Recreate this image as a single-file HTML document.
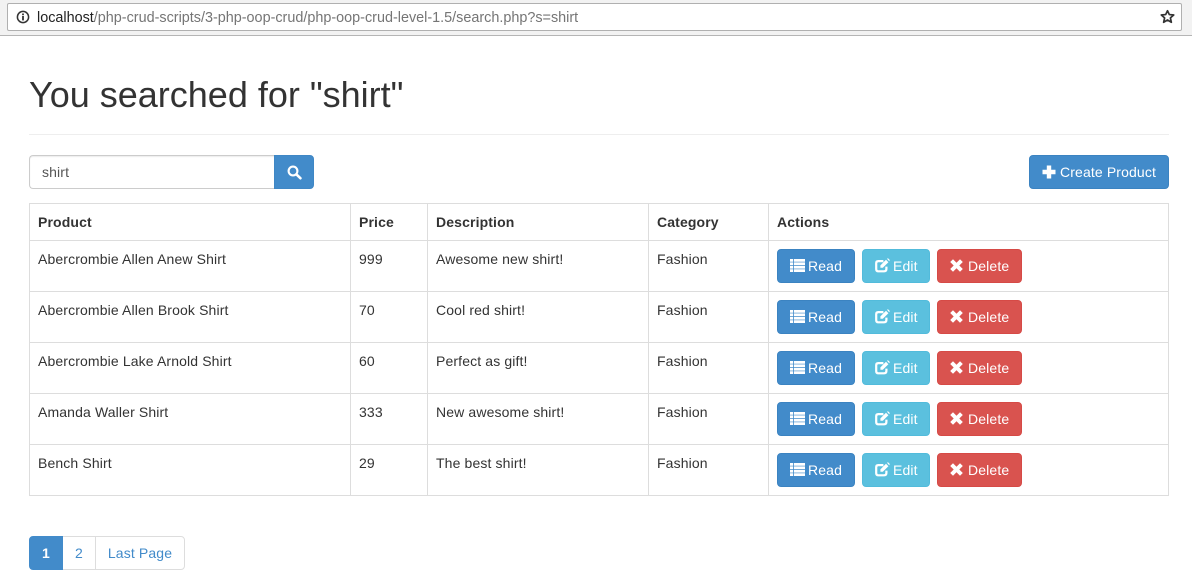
<!DOCTYPE html>
<html><head><meta charset="utf-8">
<style>
*{box-sizing:border-box}
html,body{margin:0;padding:0;background:#fff;width:1192px;height:585px;overflow:hidden;font-family:"Liberation Sans",Arial,sans-serif;font-size:14px;color:#333;letter-spacing:.13px}
.a{position:absolute}
.bar{left:0;top:0;width:1192px;height:36px;background:#f2f2f2;border-bottom:1px solid #b5b5b5}
.url{left:7px;top:3px;width:1175px;height:28px;background:#fff;border:1px solid #b0b0b0;border-radius:2px}
.urlt{left:37px;top:10px;font-size:14.4px;line-height:16px;color:#757575;white-space:nowrap;letter-spacing:0}
.urlt b{font-weight:normal;color:#222}
h1{position:absolute;left:29px;top:75px;margin:0;font-size:36px;font-weight:normal;line-height:40px;white-space:nowrap;letter-spacing:0}
.hr{left:29px;top:134px;width:1140px;height:1px;background:#eee}
.inp{left:29px;top:155px;width:246px;height:34px;border:1px solid #ccc;border-right:0;border-radius:4px 0 0 4px;padding:6px 12px;line-height:20px;color:#555;box-shadow:inset 0 1px 1px rgba(0,0,0,.075)}
.sbtn{left:274px;top:155px;width:40px;height:34px;background:#428bca;border:1px solid #3f87c5;border-radius:0 4px 4px 0}
.btn{position:absolute;height:34px;border-radius:4px;color:#fff;line-height:32px;white-space:nowrap;border:1px solid}
.btn svg{position:absolute}
.btn span{position:absolute;top:0}
.p{background:#428bca;border-color:#3b83c1}
.i{background:#5bc0de;border-color:#52bbdb}
.d{background:#d9534f;border-color:#d64a46}
.h{background:#ddd}
.t{position:absolute;line-height:20px;white-space:nowrap}
.th{font-weight:bold}
.pg{position:absolute;top:536px;height:34px;line-height:32px;text-align:center;color:#428bca;border:1px solid #ddd;background:#fff}
</style></head><body>
<div class="a bar"></div>
<div class="a url"></div>
<svg class="a" style="left:16px;top:10px" width="14" height="14" viewBox="0 0 14 14"><circle cx="7" cy="7" r="5.6" fill="none" stroke="#333" stroke-width="1.5"/><rect x="6.1" y="6" width="1.8" height="4.4" fill="#333"/><rect x="6.1" y="3.5" width="1.8" height="1.7" fill="#333"/></svg>
<div class="a urlt"><b>localhost</b>/php-crud-scripts/3-php-oop-crud/php-oop-crud-level-1.5/search.php?s=shirt</div>
<svg class="a" style="left:1160px;top:9px" width="15" height="15" viewBox="0 0 14 14"><path d="M7 1.6 8.7 5.2 12.8 5.6 9.7 8.3 10.6 12.4 7 10.3 3.4 12.4 4.3 8.3 1.2 5.6 5.3 5.2Z" fill="none" stroke="#333" stroke-width="1.6" stroke-linejoin="round"/></svg>

<h1>You searched for "shirt"</h1>
<div class="a hr"></div>

<div class="a inp">shirt</div>
<div class="a sbtn"><svg style="position:absolute;left:12px;top:9px" width="15" height="15" viewBox="0 0 15 15"><circle cx="6" cy="6" r="4.4" fill="none" stroke="#fff" stroke-width="2.1"/><path d="M9.6 9.6 13.4 13.2" stroke="#fff" stroke-width="2.6" stroke-linecap="round"/></svg></div>

<div class="btn p" style="left:1029px;top:155px;width:140px"><svg style="left:12px;top:9px" width="14" height="14" viewBox="0 0 14 14"><path d="M4.8 0.5H9.2V4.8H13.5V9.2H9.2V13.5H4.8V9.2H0.5V4.8H4.8Z" fill="#fff"/></svg><span style="left:30px">Create Product</span></div>

<!-- table lines -->
<div class="a h" style="left:29px;top:203px;width:1140px;height:1px"></div>
<div class="a h" style="left:29px;top:240px;width:1140px;height:1px"></div>
<div class="a h" style="left:29px;top:291px;width:1140px;height:1px"></div>
<div class="a h" style="left:29px;top:342px;width:1140px;height:1px"></div>
<div class="a h" style="left:29px;top:393px;width:1140px;height:1px"></div>
<div class="a h" style="left:29px;top:444px;width:1140px;height:1px"></div>
<div class="a h" style="left:29px;top:495px;width:1140px;height:1px"></div>
<div class="a h" style="left:29px;top:203px;width:1px;height:293px"></div>
<div class="a h" style="left:350px;top:203px;width:1px;height:293px"></div>
<div class="a h" style="left:427px;top:203px;width:1px;height:293px"></div>
<div class="a h" style="left:648px;top:203px;width:1px;height:293px"></div>
<div class="a h" style="left:768px;top:203px;width:1px;height:293px"></div>
<div class="a h" style="left:1168px;top:203px;width:1px;height:293px"></div>

<div class="t th" style="left:38px;top:212px">Product</div>
<div class="t th" style="left:359px;top:212px">Price</div>
<div class="t th" style="left:436px;top:212px">Description</div>
<div class="t th" style="left:657px;top:212px">Category</div>
<div class="t th" style="left:777px;top:212px">Actions</div>

<div class="t" style="left:38px;top:249px">Abercrombie Allen Anew Shirt</div>
<div class="t" style="left:359px;top:249px">999</div>
<div class="t" style="left:436px;top:249px">Awesome new shirt!</div>
<div class="t" style="left:657px;top:249px">Fashion</div>

<div class="t" style="left:38px;top:300px">Abercrombie Allen Brook Shirt</div>
<div class="t" style="left:359px;top:300px">70</div>
<div class="t" style="left:436px;top:300px">Cool red shirt!</div>
<div class="t" style="left:657px;top:300px">Fashion</div>

<div class="t" style="left:38px;top:351px">Abercrombie Lake Arnold Shirt</div>
<div class="t" style="left:359px;top:351px">60</div>
<div class="t" style="left:436px;top:351px">Perfect as gift!</div>
<div class="t" style="left:657px;top:351px">Fashion</div>

<div class="t" style="left:38px;top:402px">Amanda Waller Shirt</div>
<div class="t" style="left:359px;top:402px">333</div>
<div class="t" style="left:436px;top:402px">New awesome shirt!</div>
<div class="t" style="left:657px;top:402px">Fashion</div>

<div class="t" style="left:38px;top:453px">Bench Shirt</div>
<div class="t" style="left:359px;top:453px">29</div>
<div class="t" style="left:436px;top:453px">The best shirt!</div>
<div class="t" style="left:657px;top:453px">Fashion</div>

<!-- row 1 -->
<div class="btn p" style="left:777px;top:249px;width:78px"><svg style="left:12px;top:9px" width="15" height="13" viewBox="0 0 15 13"><path d="M0 0H3.2V2.7H0ZM4 0H15V2.7H4ZM0 3.4H3.2V6.1H0ZM4 3.4H15V6.1H4ZM0 6.9H3.2V9.6H0ZM4 6.9H15V9.6H4ZM0 10.3H3.2V13H0ZM4 10.3H15V13H4Z" fill="#fff"/></svg><span style="left:30px">Read</span></div>
<div class="btn i" style="left:862px;top:249px;width:68px"><svg style="left:12px;top:8px" width="15" height="15" viewBox="0 0 15 15"><path d="M11.4 8.6V11Q11.4 13.3 9.1 13.3H3.3Q1.2 13.3 1.2 11.1V5.2Q1.2 3.1 3.3 3.1H8.4" fill="none" stroke="#fff" stroke-width="2.2"/><path d="M5.4 7.4 11 1.8 13.4 4.2 7.8 9.8H5.4Z" fill="#fff"/><path d="M12 0.8 13 0.2 14.8 2 14.2 3.2Z" fill="#fff"/></svg><span style="left:30px">Edit</span></div>
<div class="btn d" style="left:937px;top:249px;width:85px"><svg style="left:12px;top:9px" width="13" height="13" viewBox="0 0 13 13"><path d="M3 0.2 6.5 3.7 10 0.2 12.8 3 9.3 6.5 12.8 10 10 12.8 6.5 9.3 3 12.8 0.2 10 3.7 6.5 0.2 3Z" fill="#fff"/></svg><span style="left:30px">Delete</span></div>
<!-- row 2 -->
<div class="btn p" style="left:777px;top:300px;width:78px"><svg style="left:12px;top:9px" width="15" height="13" viewBox="0 0 15 13"><path d="M0 0H3.2V2.7H0ZM4 0H15V2.7H4ZM0 3.4H3.2V6.1H0ZM4 3.4H15V6.1H4ZM0 6.9H3.2V9.6H0ZM4 6.9H15V9.6H4ZM0 10.3H3.2V13H0ZM4 10.3H15V13H4Z" fill="#fff"/></svg><span style="left:30px">Read</span></div>
<div class="btn i" style="left:862px;top:300px;width:68px"><svg style="left:12px;top:8px" width="15" height="15" viewBox="0 0 15 15"><path d="M11.4 8.6V11Q11.4 13.3 9.1 13.3H3.3Q1.2 13.3 1.2 11.1V5.2Q1.2 3.1 3.3 3.1H8.4" fill="none" stroke="#fff" stroke-width="2.2"/><path d="M5.4 7.4 11 1.8 13.4 4.2 7.8 9.8H5.4Z" fill="#fff"/><path d="M12 0.8 13 0.2 14.8 2 14.2 3.2Z" fill="#fff"/></svg><span style="left:30px">Edit</span></div>
<div class="btn d" style="left:937px;top:300px;width:85px"><svg style="left:12px;top:9px" width="13" height="13" viewBox="0 0 13 13"><path d="M3 0.2 6.5 3.7 10 0.2 12.8 3 9.3 6.5 12.8 10 10 12.8 6.5 9.3 3 12.8 0.2 10 3.7 6.5 0.2 3Z" fill="#fff"/></svg><span style="left:30px">Delete</span></div>
<!-- row 3 -->
<div class="btn p" style="left:777px;top:351px;width:78px"><svg style="left:12px;top:9px" width="15" height="13" viewBox="0 0 15 13"><path d="M0 0H3.2V2.7H0ZM4 0H15V2.7H4ZM0 3.4H3.2V6.1H0ZM4 3.4H15V6.1H4ZM0 6.9H3.2V9.6H0ZM4 6.9H15V9.6H4ZM0 10.3H3.2V13H0ZM4 10.3H15V13H4Z" fill="#fff"/></svg><span style="left:30px">Read</span></div>
<div class="btn i" style="left:862px;top:351px;width:68px"><svg style="left:12px;top:8px" width="15" height="15" viewBox="0 0 15 15"><path d="M11.4 8.6V11Q11.4 13.3 9.1 13.3H3.3Q1.2 13.3 1.2 11.1V5.2Q1.2 3.1 3.3 3.1H8.4" fill="none" stroke="#fff" stroke-width="2.2"/><path d="M5.4 7.4 11 1.8 13.4 4.2 7.8 9.8H5.4Z" fill="#fff"/><path d="M12 0.8 13 0.2 14.8 2 14.2 3.2Z" fill="#fff"/></svg><span style="left:30px">Edit</span></div>
<div class="btn d" style="left:937px;top:351px;width:85px"><svg style="left:12px;top:9px" width="13" height="13" viewBox="0 0 13 13"><path d="M3 0.2 6.5 3.7 10 0.2 12.8 3 9.3 6.5 12.8 10 10 12.8 6.5 9.3 3 12.8 0.2 10 3.7 6.5 0.2 3Z" fill="#fff"/></svg><span style="left:30px">Delete</span></div>
<!-- row 4 -->
<div class="btn p" style="left:777px;top:402px;width:78px"><svg style="left:12px;top:9px" width="15" height="13" viewBox="0 0 15 13"><path d="M0 0H3.2V2.7H0ZM4 0H15V2.7H4ZM0 3.4H3.2V6.1H0ZM4 3.4H15V6.1H4ZM0 6.9H3.2V9.6H0ZM4 6.9H15V9.6H4ZM0 10.3H3.2V13H0ZM4 10.3H15V13H4Z" fill="#fff"/></svg><span style="left:30px">Read</span></div>
<div class="btn i" style="left:862px;top:402px;width:68px"><svg style="left:12px;top:8px" width="15" height="15" viewBox="0 0 15 15"><path d="M11.4 8.6V11Q11.4 13.3 9.1 13.3H3.3Q1.2 13.3 1.2 11.1V5.2Q1.2 3.1 3.3 3.1H8.4" fill="none" stroke="#fff" stroke-width="2.2"/><path d="M5.4 7.4 11 1.8 13.4 4.2 7.8 9.8H5.4Z" fill="#fff"/><path d="M12 0.8 13 0.2 14.8 2 14.2 3.2Z" fill="#fff"/></svg><span style="left:30px">Edit</span></div>
<div class="btn d" style="left:937px;top:402px;width:85px"><svg style="left:12px;top:9px" width="13" height="13" viewBox="0 0 13 13"><path d="M3 0.2 6.5 3.7 10 0.2 12.8 3 9.3 6.5 12.8 10 10 12.8 6.5 9.3 3 12.8 0.2 10 3.7 6.5 0.2 3Z" fill="#fff"/></svg><span style="left:30px">Delete</span></div>
<!-- row 5 -->
<div class="btn p" style="left:777px;top:453px;width:78px"><svg style="left:12px;top:9px" width="15" height="13" viewBox="0 0 15 13"><path d="M0 0H3.2V2.7H0ZM4 0H15V2.7H4ZM0 3.4H3.2V6.1H0ZM4 3.4H15V6.1H4ZM0 6.9H3.2V9.6H0ZM4 6.9H15V9.6H4ZM0 10.3H3.2V13H0ZM4 10.3H15V13H4Z" fill="#fff"/></svg><span style="left:30px">Read</span></div>
<div class="btn i" style="left:862px;top:453px;width:68px"><svg style="left:12px;top:8px" width="15" height="15" viewBox="0 0 15 15"><path d="M11.4 8.6V11Q11.4 13.3 9.1 13.3H3.3Q1.2 13.3 1.2 11.1V5.2Q1.2 3.1 3.3 3.1H8.4" fill="none" stroke="#fff" stroke-width="2.2"/><path d="M5.4 7.4 11 1.8 13.4 4.2 7.8 9.8H5.4Z" fill="#fff"/><path d="M12 0.8 13 0.2 14.8 2 14.2 3.2Z" fill="#fff"/></svg><span style="left:30px">Edit</span></div>
<div class="btn d" style="left:937px;top:453px;width:85px"><svg style="left:12px;top:9px" width="13" height="13" viewBox="0 0 13 13"><path d="M3 0.2 6.5 3.7 10 0.2 12.8 3 9.3 6.5 12.8 10 10 12.8 6.5 9.3 3 12.8 0.2 10 3.7 6.5 0.2 3Z" fill="#fff"/></svg><span style="left:30px">Delete</span></div>

<div class="pg" style="left:62px;width:34px">2</div>
<div class="pg" style="left:95px;width:90px;border-radius:0 4px 4px 0">Last Page</div>
<div class="pg" style="left:29px;width:34px;background:#428bca;border-color:#428bca;color:#fff;font-weight:bold;border-radius:4px 0 0 4px">1</div>
</body></html>
